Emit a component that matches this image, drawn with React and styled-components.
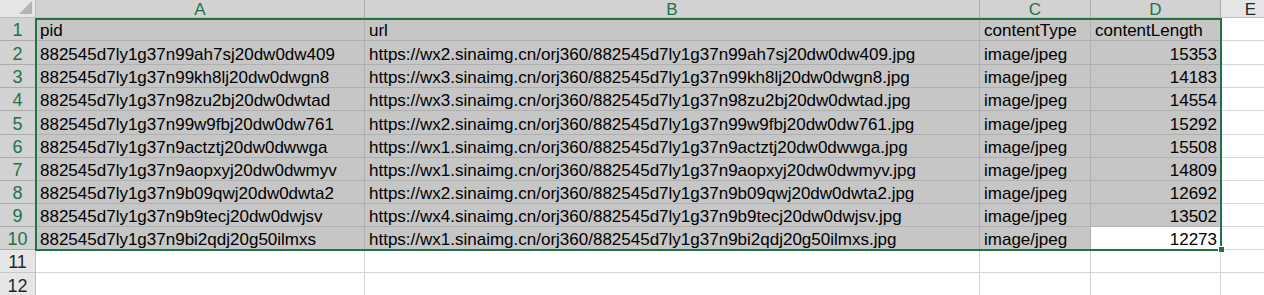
import styled, { createGlobalStyle } from 'styled-components';

const GlobalStyle = createGlobalStyle`
  html, body {
    margin: 0;
    padding: 0;
    background: #ffffff;
    overflow: hidden;
  }
`;

const COLS = [
  { key: 'A', width: 329 },
  { key: 'B', width: 615 },
  { key: 'C', width: 111 },
  { key: 'D', width: 130 },
  { key: 'E', width: 60 },
];

const ROW_H = [23, 24, 23, 23, 24, 23, 23, 23, 23, 23, 23, 24];

const DATA = [
  ['pid', 'url', 'contentType', 'contentLength'],
  ['882545d7ly1g37n99ah7sj20dw0dw409', 'https://wx2.sinaimg.cn/orj360/882545d7ly1g37n99ah7sj20dw0dw409.jpg', 'image/jpeg', '15353'],
  ['882545d7ly1g37n99kh8lj20dw0dwgn8', 'https://wx3.sinaimg.cn/orj360/882545d7ly1g37n99kh8lj20dw0dwgn8.jpg', 'image/jpeg', '14183'],
  ['882545d7ly1g37n98zu2bj20dw0dwtad', 'https://wx3.sinaimg.cn/orj360/882545d7ly1g37n98zu2bj20dw0dwtad.jpg', 'image/jpeg', '14554'],
  ['882545d7ly1g37n99w9fbj20dw0dw761', 'https://wx2.sinaimg.cn/orj360/882545d7ly1g37n99w9fbj20dw0dw761.jpg', 'image/jpeg', '15292'],
  ['882545d7ly1g37n9actztj20dw0dwwga', 'https://wx1.sinaimg.cn/orj360/882545d7ly1g37n9actztj20dw0dwwga.jpg', 'image/jpeg', '15508'],
  ['882545d7ly1g37n9aopxyj20dw0dwmyv', 'https://wx1.sinaimg.cn/orj360/882545d7ly1g37n9aopxyj20dw0dwmyv.jpg', 'image/jpeg', '14809'],
  ['882545d7ly1g37n9b09qwj20dw0dwta2', 'https://wx2.sinaimg.cn/orj360/882545d7ly1g37n9b09qwj20dw0dwta2.jpg', 'image/jpeg', '12692'],
  ['882545d7ly1g37n9b9tecj20dw0dwjsv', 'https://wx4.sinaimg.cn/orj360/882545d7ly1g37n9b9tecj20dw0dwjsv.jpg', 'image/jpeg', '13502'],
  ['882545d7ly1g37n9bi2qdj20g50ilmxs', 'https://wx1.sinaimg.cn/orj360/882545d7ly1g37n9bi2qdj20g50ilmxs.jpg', 'image/jpeg', '12273'],
  ['', '', '', ''],
  ['', '', '', ''],
];

const GREEN = '#217346';
const FONT = `"Liberation Sans", Arial, sans-serif`;

const Sheet = styled.div`
  position: relative;
  display: flex;
  flex-direction: column;
  width: 1264px;
  height: 295px;
  font-family: ${FONT};
  background: #ffffff;
  overflow: hidden;
`;

const Row = styled.div`
  display: flex;
  flex-shrink: 0;
  height: ${({ $h }) => $h}px;
`;

const Corner = styled.div`
  position: relative;
  flex: 0 0 36px;
  box-sizing: border-box;
  background: #e6e6e6;
  border-right: 1px solid #bdbdbd;
  border-bottom: 1px solid #bdbdbd;

  &::after {
    content: '';
    position: absolute;
    right: 3px;
    bottom: 3px;
    width: 0;
    height: 0;
    border-left: 13px solid transparent;
    border-bottom: 13px solid #b4b4b4;
  }
`;

const ColHead = styled.div`
  flex: 0 0 ${({ $w }) => $w}px;
  box-sizing: border-box;
  display: flex;
  align-items: center;
  justify-content: center;
  font-size: 17px;
  line-height: 17px;
  padding-top: 1px;
  color: ${({ $sel }) => ($sel ? GREEN : '#262626')};
  background: ${({ $sel }) => ($sel ? '#d2d2d2' : '#e6e6e6')};
  border-right: 1px solid ${({ $sel }) => ($sel ? '#ababab' : '#c8c8c8')};
  border-bottom: 1px solid #bdbdbd;
`;

const RowHead = styled.div`
  flex: 0 0 36px;
  box-sizing: border-box;
  display: flex;
  align-items: flex-end;
  justify-content: center;
  font-size: 18px;
  line-height: 20px;
  color: ${({ $sel }) => ($sel ? GREEN : '#262626')};
  background: ${({ $sel }) => ($sel ? '#d2d2d2' : '#e6e6e6')};
  border-right: 1px solid #bdbdbd;
  border-bottom: 1px solid ${({ $sel }) => ($sel ? '#ababab' : '#c8c8c8')};
`;

const Cell = styled.div`
  flex: 0 0 ${({ $w }) => $w}px;
  box-sizing: border-box;
  display: flex;
  align-items: flex-end;
  justify-content: ${({ $right }) => ($right ? 'flex-end' : 'flex-start')};
  padding: 0 3px 0 4px;
  font-size: 17px;
  line-height: 19px;
  color: #000000;
  white-space: nowrap;
  overflow: hidden;
  background: ${({ $sel }) => ($sel ? '#c6c6c6' : '#ffffff')};
  border-right: 1px solid ${({ $sel }) => ($sel ? '#b0b0b0' : '#d4d4d4')};
  border-bottom: 1px solid ${({ $sel }) => ($sel ? '#b0b0b0' : '#d4d4d4')};
`;

const Selection = styled.div`
  position: absolute;
  left: 35px;
  top: 18px;
  width: 1187px;
  height: 233px;
  box-sizing: border-box;
  border: 2px solid ${GREEN};
  pointer-events: none;
`;

const FillHandle = styled.div`
  position: absolute;
  left: 1218px;
  top: 246px;
  width: 7px;
  height: 7px;
  box-sizing: border-box;
  background: ${GREEN};
  border: 1px solid #ffffff;
`;

const App = () => {
  return (
    <>
      <GlobalStyle />
      <Sheet>
        <Row $h={18}>
          <Corner />
          {COLS.map((c, i) => (
            <ColHead key={c.key} $w={c.width} $sel={i < 4}>
              {c.key}
            </ColHead>
          ))}
        </Row>
        {DATA.map((row, r) => {
          const rowSel = r < 10;
          return (
            <Row key={r} $h={ROW_H[r]}>
              <RowHead $sel={rowSel}>{r + 1}</RowHead>
              {COLS.map((c, ci) => {
                const value = ci < 4 ? row[ci] : '';
                const active = r === 9 && ci === 3;
                const sel = rowSel && ci < 4 && !active;
                const right = ci === 3 && r > 0;
                return (
                  <Cell key={c.key} $w={c.width} $sel={sel} $right={right}>
                    {value}
                  </Cell>
                );
              })}
            </Row>
          );
        })}
        <Selection />
        <FillHandle />
      </Sheet>
    </>
  );
};

export default App;
